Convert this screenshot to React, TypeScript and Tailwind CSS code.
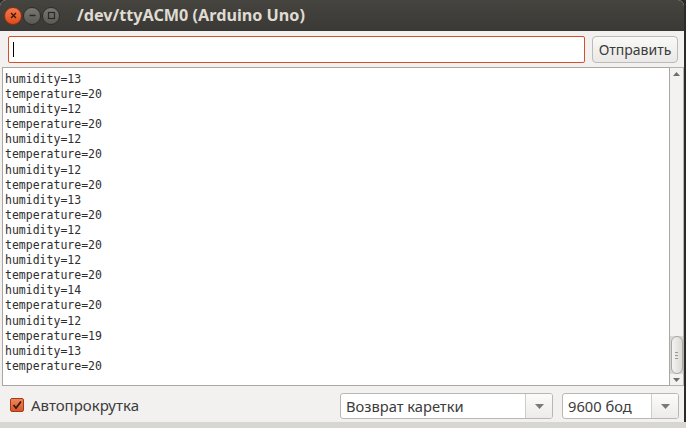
const LINES = [
  'humidity=13', 'temperature=20', 'humidity=12', 'temperature=20', 'humidity=12',
  'temperature=20', 'humidity=12', 'temperature=20', 'humidity=13', 'temperature=20',
  'humidity=12', 'temperature=20', 'humidity=12', 'temperature=20', 'humidity=14',
  'temperature=20', 'humidity=12', 'temperature=19', 'humidity=13', 'temperature=20',
];

const ui = { fontFamily: '"Noto Sans", "DejaVu Sans", sans-serif' };

function WinButton({ kind }: { kind: 'close' | 'min' | 'max' }) {
  const close = kind === 'close';
  return (
    <div
      className={`w-[18px] h-[18px] rounded-full flex items-center justify-center border ${
        close
          ? 'bg-gradient-to-b from-[#f47a4a] to-[#df4a1a] border-[#8a2e12]'
          : 'bg-gradient-to-b from-[#7a7873] to-[#5a5954] border-[#2e2d2a]'
      }`}
    >
      <svg width="9" height="9" viewBox="0 0 9 9">
        {kind === 'close' && (
          <path d="M2 2 L7 7 M7 2 L2 7" stroke="#3a1508" strokeWidth="1.3" />
        )}
        {kind === 'min' && <path d="M1.5 4.5 H7.5" stroke="#2a2926" strokeWidth="1.4" />}
        {kind === 'max' && (
          <rect x="1.5" y="1.5" width="6" height="6" fill="none" stroke="#2a2926" strokeWidth="1.2" />
        )}
      </svg>
    </div>
  );
}

function Select({ label, width }: { label: string; width: number }) {
  return (
    <div
      className="h-[26px] flex rounded-[3px] border border-[#b9b7b3] bg-white overflow-hidden"
      style={{ width }}
    >
      <div className="flex-1 flex items-center pl-[5px] text-[14.7px] text-[#3c3c3c]" style={ui}>
        {label}
      </div>
      <div className="w-[27px] flex items-center justify-center border-l border-[#cfcdc9] bg-gradient-to-b from-[#fbfbfa] to-[#ecebe9]">
        <svg width="9" height="5" viewBox="0 0 9 5">
          <path d="M0 0 H9 L4.5 5 Z" fill="#7a7975" />
        </svg>
      </div>
    </div>
  );
}

export default function App() {
  return (
    <div className="w-[686px] h-[428px] bg-[#2c2b28] relative overflow-hidden">
      <div className="absolute left-0 top-[422px] w-[686px] h-[6px] bg-[#d8d6d2]" />
      <div className="w-[684px] h-[422px] flex flex-col bg-[#f2f1f0] rounded-t-[6px] overflow-hidden">
        {/* Title bar */}
        <div className="h-[31px] shrink-0 flex items-center bg-gradient-to-b from-[#45443f] to-[#3a3935] pl-[4px]">
          <div className="flex items-center gap-[1px]">
            <WinButton kind="close" />
            <WinButton kind="min" />
            <WinButton kind="max" />
          </div>
          <div
            className="ml-[17px] text-[16.2px] font-bold text-[#dfdbd2] leading-none"
            style={ui}
          >
            /dev/ttyACM0 (Arduino Uno)
          </div>
        </div>

        {/* Input row */}
        <div className="h-[36px] shrink-0 flex items-start pt-[5px] pl-[8px] pr-[6px] gap-[7px]">
          <div className="flex-1 h-[27px] bg-white border border-[#d5502a] rounded-[2px] flex items-center pl-[4px]">
            <div className="w-px h-[15px] bg-black" />
          </div>
          <div
            className="w-[86px] h-[27px] rounded-[4px] border border-[#bdbbb7] bg-gradient-to-b from-[#f9f9f8] to-[#e9e8e6] flex items-center justify-center text-[14px] text-[#3c3c3c]"
            style={ui}
          >
            Отправить
          </div>
        </div>

        {/* Output */}
        <div className="flex h-[319px] shrink-0 pl-[2px]">
          <div className="flex-1 bg-white border border-[#a9a7a3] overflow-hidden">
            <div
              className="pl-[2px] pt-[4px] text-[11.5px] leading-[15.1px] text-[#2e2e2e]"
              style={{ fontFamily: '"DejaVu Sans Mono", monospace' }}
            >
              {LINES.map((l, i) => (
                <div key={i}>{l}</div>
              ))}
            </div>
          </div>
          <div className="w-[14px] bg-[#d9d7d3] border-y border-r border-[#b5b3af] flex flex-col items-center">
            <div className="h-[12px] w-full flex items-center justify-center bg-[#f3f2f0]">
              <svg width="7" height="4" viewBox="0 0 7 4">
                <path d="M0 4 H7 L3.5 0 Z" fill="#6e6d69" />
              </svg>
            </div>
            <div className="flex-1 w-full bg-[#f3f2f0]" />
            <div className="h-[38px] w-[12px] rounded-[6px] border border-[#a9a7a3] bg-gradient-to-r from-[#f4f3f1] to-[#dcdad6] flex flex-col items-center justify-center gap-[2px]">
              <div className="w-[3px] h-px bg-[#9a9894]" />
              <div className="w-[3px] h-px bg-[#9a9894]" />
              <div className="w-[3px] h-px bg-[#9a9894]" />
            </div>
            <div className="h-[11px] w-full flex items-center justify-center bg-[#f3f2f0]">
              <svg width="7" height="4" viewBox="0 0 7 4">
                <path d="M0 0 H7 L3.5 4 Z" fill="#6e6d69" />
              </svg>
            </div>
          </div>
        </div>

        {/* Bottom bar */}
        <div className="flex-1 flex items-center pl-[10px] pr-[5px]">
          <div className="w-[14px] h-[14px] mt-[2px] rounded-[2px] bg-gradient-to-b from-[#f0855a] to-[#d9552a] border border-[#a23c18] flex items-center justify-center">
            <svg width="12" height="12" viewBox="0 0 12 12">
              <path d="M2.5 6 L5 9 L10 2.5" fill="none" stroke="#3a1a0e" strokeWidth="1.8" />
            </svg>
          </div>
          <div className="ml-[7px] mt-[2px] text-[15px] text-[#3c3c3c]" style={ui}>
            Автопрокрутка
          </div>
          <div className="ml-auto flex items-center gap-[9px] pt-[4px]">
            <Select label="Возврат каретки" width={213} />
            <Select label="9600 бод" width={117} />
          </div>
        </div>
      </div>
    </div>
  );
}
